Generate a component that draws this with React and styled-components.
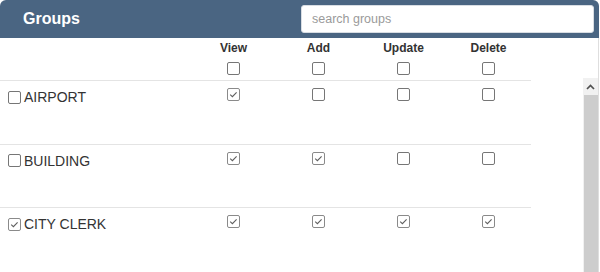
import React from "react";
import styled, { createGlobalStyle } from "styled-components";

const GlobalStyle = createGlobalStyle`
  html, body {
    margin: 0;
    padding: 0;
    overflow: hidden;
    background: #ffffff;
    font-family: "Liberation Sans", Arial, sans-serif;
  }
`;

const Panel = styled.div`
  width: 599px;
  display: flex;
  flex-direction: column;
`;

const Header = styled.div`
  height: 38px;
  box-sizing: border-box;
  background: #4a6582;
  border-radius: 6px 6px 0 0;
  display: flex;
  align-items: center;
  justify-content: space-between;
  padding: 0 5px 0 23px;
`;

const Title = styled.h2`
  margin: 0;
  font-size: 16px;
  font-weight: bold;
  color: #ffffff;
`;

const Search = styled.input`
  width: 293px;
  height: 28px;
  box-sizing: border-box;
  border: 1px solid #d8dde3;
  border-radius: 3px;
  background: #ffffff;
  padding: 0 10px;
  font-family: "Liberation Sans", Arial, sans-serif;
  font-size: 12.5px;
  color: #333;
  outline: none;
  &::placeholder {
    color: #9a9a9a;
  }
`;

const Body = styled.div`
  border-right: 1px solid #dedede;
  display: flex;
  flex-direction: column;
`;

const Grid = styled.div`
  width: 531px;
  display: grid;
  grid-template-columns: 191px repeat(4, 85px);
`;

const HeadRow = styled(Grid)`
  height: 40px;
`;

const HeadCell = styled.div`
  display: flex;
  flex-direction: column;
  align-items: center;
  padding-top: 3px;
  gap: 7px;
  font-size: 12px;
  line-height: 14px;
  font-weight: bold;
  color: #333;
`;

const ScrollArea = styled.div`
  height: 194px;
  display: flex;
`;

const RowList = styled.div`
  flex: 1;
  overflow: hidden;
  padding-top: 2px;
`;

const Rail = styled.div`
  width: 15px;
  display: flex;
  flex-direction: column;
  background: #f1f1f1;
`;

const ArrowButton = styled.div`
  height: 17px;
  display: flex;
  align-items: center;
  justify-content: center;
`;

const Thumb = styled.div`
  flex: 1;
  margin-left: 1px;
  background: #cdcdcd;
`;

const Row = styled(Grid)`
  height: 63.5px;
  box-sizing: border-box;
  border-top: 1px solid #e4e4e4;
`;

const NameCell = styled.label`
  display: flex;
  align-items: center;
  align-self: start;
  gap: 3px;
  padding: 8px 0 0 8px;
  font-size: 14px;
  line-height: 16px;
  color: #333;
`;

const PermCell = styled.div`
  display: flex;
  justify-content: center;
  align-items: flex-start;
  padding-top: 7px;
`;

const Box = styled.span`
  width: 13px;
  height: 13px;
  box-sizing: border-box;
  border: 1px solid ${(p) => (p.$checked ? "#8a8a8a" : "#767676")};
  border-radius: 2px;
  background: #ffffff;
  display: inline-flex;
  align-items: center;
  justify-content: center;
  flex-shrink: 0;
`;

const CheckBox = ({ checked }) => (
  <Box $checked={checked} role="checkbox" aria-checked={checked}>
    {checked && (
      <svg width="11" height="11" viewBox="0 0 11 11">
        <path d="M2.2 5.6 L4.4 7.7 L8.6 3.3" fill="none" stroke="#5f5f5f" strokeWidth="1.1" />
      </svg>
    )}
  </Box>
);

const columns = ["View", "Add", "Update", "Delete"];

const groups = [
  { name: "AIRPORT", all: false, perms: [true, false, false, false] },
  { name: "BUILDING", all: false, perms: [true, true, false, false] },
  { name: "CITY CLERK", all: true, perms: [true, true, true, true] },
];

export default function App() {
  return (
    <>
      <GlobalStyle />
      <Panel>
        <Header>
          <Title>Groups</Title>
          <Search placeholder="search groups" />
        </Header>
        <Body>
          <HeadRow>
            <div />
            {columns.map((c) => (
              <HeadCell key={c}>
                {c}
                <CheckBox checked={false} />
              </HeadCell>
            ))}
          </HeadRow>
          <ScrollArea>
            <RowList>
              {groups.map((g) => (
                <Row key={g.name}>
                  <NameCell>
                    <CheckBox checked={g.all} />
                    {g.name}
                  </NameCell>
                  {g.perms.map((p, i) => (
                    <PermCell key={i}>
                      <CheckBox checked={p} />
                    </PermCell>
                  ))}
                </Row>
              ))}
            </RowList>
            <Rail>
              <ArrowButton>
                <svg width="9" height="6" viewBox="0 0 9 6">
                  <path d="M1 5 L4.5 1.5 L8 5" fill="none" stroke="#505050" strokeWidth="1.7" />
                </svg>
              </ArrowButton>
              <Thumb />
            </Rail>
          </ScrollArea>
        </Body>
      </Panel>
    </>
  );
}
